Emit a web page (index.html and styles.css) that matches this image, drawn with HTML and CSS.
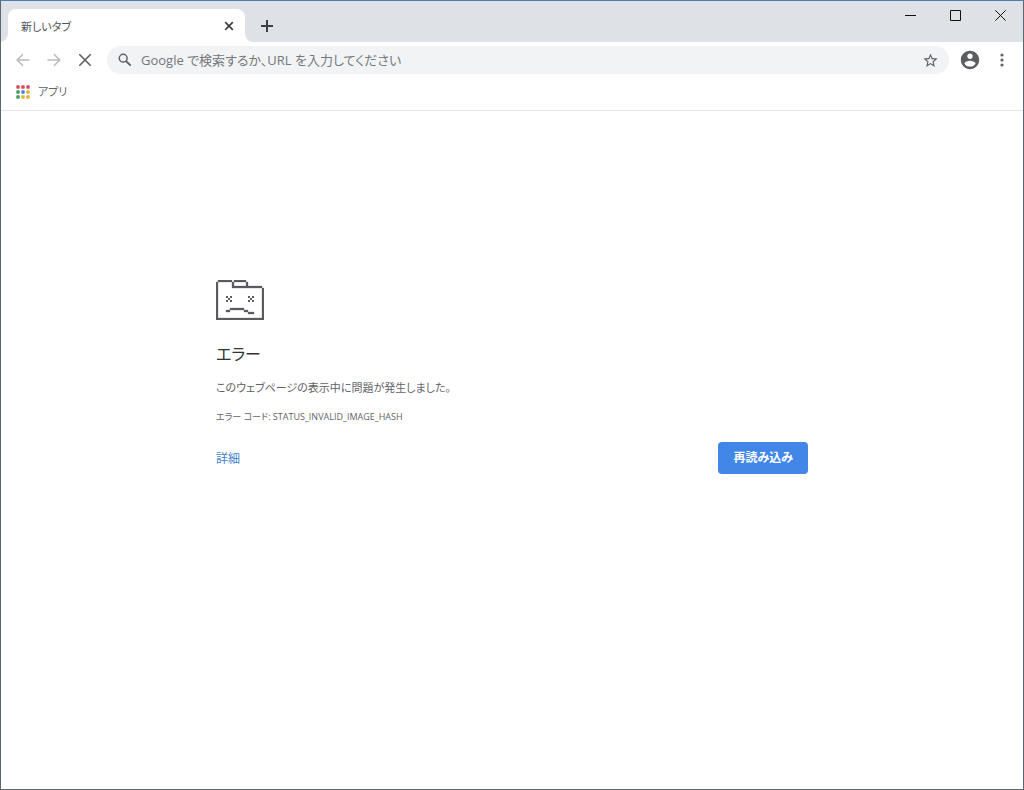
FILE: index.html
```html
<!DOCTYPE html>
<html lang="ja">
<head>
<meta charset="utf-8">
<meta name="viewport" content="width=device-width, initial-scale=1">
<title>新しいタブ</title>
<link rel="stylesheet" href="styles.css">
</head>
<body>
<div class="window">
  <header class="titlebar">
    <div class="tab">
      <span class="tab-title">新しいタブ</span>
      <button class="icon-button tab-close" aria-label="タブを閉じる">
        <svg width="10" height="10" viewBox="0 0 10 10"><path d="M1.2 1.2 8.8 8.8M8.8 1.2 1.2 8.8" fill="none" stroke="#3c4043" stroke-width="1.7"/></svg>
      </button>
    </div>
    <button class="icon-button new-tab" aria-label="新しいタブを開く">
      <svg width="12" height="12" viewBox="0 0 12 12"><path d="M6 0v12M0 6h12" fill="none" stroke="#3c4043" stroke-width="2"/></svg>
    </button>
    <div class="window-controls">
      <button class="icon-button window-button" aria-label="最小化"><svg width="11" height="11" viewBox="0 0 11 11"><path d="M0 5.5h11" stroke="#111" fill="none"/></svg></button>
      <button class="icon-button window-button" aria-label="最大化"><svg width="11" height="11" viewBox="0 0 11 11"><path d="M.5.5h10v10H.5z" stroke="#111" fill="none"/></svg></button>
      <button class="icon-button window-button" aria-label="閉じる"><svg width="11" height="11" viewBox="0 0 11 11"><path d="M.3.3l10.4 10.4M10.7.3.3 10.7" stroke="#111" fill="none"/></svg></button>
    </div>
  </header>

  <nav class="toolbar" aria-label="ツールバー">
    <button class="icon-button nav-button" aria-label="戻る"><svg width="14" height="14" viewBox="0 0 14 14"><path d="M13.5 7H1.5M7 1.2 1.2 7 7 12.8" fill="none" stroke="#babcbe" stroke-width="1.6"/></svg></button>
    <button class="icon-button nav-button" aria-label="進む"><svg width="14" height="14" viewBox="0 0 14 14"><path d="M.5 7h12M7 1.2 12.8 7 7 12.8" fill="none" stroke="#babcbe" stroke-width="1.6"/></svg></button>
    <button class="icon-button nav-button" aria-label="読み込みを中止"><svg width="14" height="14" viewBox="0 0 14 14"><path d="M1.3 1.3l11.4 11.4M12.7 1.3 1.3 12.7" fill="none" stroke="#5a5d61" stroke-width="1.6"/></svg></button>
    <div class="omnibox">
      <svg width="14" height="14" viewBox="0 0 14 14" aria-hidden="true"><circle cx="5.2" cy="5.2" r="3.9" fill="none" stroke="#5f6368" stroke-width="1.5"/><path d="M8 8l4.7 4.7" stroke="#5f6368" stroke-width="1.8"/></svg>
      <input class="address" type="text" aria-label="アドレスと検索バー" placeholder="Google で検索するか、URL を入力してください">
      <button class="icon-button" aria-label="ブックマークに追加"><svg width="17" height="17" viewBox="0 0 24 24"><path fill="#5f6368" d="M22 9.24l-7.19-.62L12 2 9.19 8.63 2 9.24l5.46 4.73L5.82 21 12 17.27 18.18 21l-1.63-7.03L22 9.24zM12 15.4l-3.76 2.27 1-4.28-3.32-2.88 4.38-.38L12 6.1l1.71 4.04 4.38.38-3.32 2.88 1 4.28L12 15.4z"/></svg></button>
    </div>
    <button class="icon-button profile" aria-label="プロフィール"><svg width="22" height="22" viewBox="0 0 24 24"><path fill="#5a5d61" d="M12 2C6.48 2 2 6.48 2 12s4.48 10 10 10 10-4.48 10-10S17.52 2 12 2zm0 3c1.66 0 3 1.34 3 3s-1.34 3-3 3-3-1.34-3-3 1.34-3 3-3zm0 14.2c-2.5 0-4.71-1.28-6-3.22.03-1.99 4-3.08 6-3.08 1.99 0 5.97 1.09 6 3.08-1.29 1.94-3.5 3.22-6 3.22z"/></svg></button>
    <button class="icon-button menu" aria-label="メニュー"><svg width="4" height="14" viewBox="0 0 4 14"><g fill="#5f6368"><circle cx="2" cy="2" r="1.6"/><circle cx="2" cy="7" r="1.6"/><circle cx="2" cy="12" r="1.6"/></g></svg></button>
  </nav>

  <nav class="bookmarks" aria-label="ブックマーク バー">
    <button class="apps">
      <svg width="14" height="14" viewBox="0 0 14 14" aria-hidden="true"><g fill="#d9485a"><rect x=".3" y=".3" width="3.4" height="3.4" rx=".8"/><rect x="5.3" y=".3" width="3.4" height="3.4" rx=".8"/><rect x="10.3" y=".3" width="3.4" height="3.4" rx=".8"/></g><g fill="#3d9e5c"><rect x=".3" y="5.3" width="3.4" height="3.4" rx=".8"/><rect x=".3" y="10.3" width="3.4" height="3.4" rx=".8"/></g><rect fill="#4380df" x="5.3" y="5.3" width="3.4" height="3.4" rx=".8"/><g fill="#dfb23a"><rect x="10.3" y="5.3" width="3.4" height="3.4" rx=".8"/><rect x="5.3" y="10.3" width="3.4" height="3.4" rx=".8"/><rect x="10.3" y="10.3" width="3.4" height="3.4" rx=".8"/></g></svg>
      <span>アプリ</span>
    </button>
  </nav>

  <main class="page">
    <section class="error">
      <svg class="sad-icon" width="48" height="40" viewBox="0 0 24 20" aria-hidden="true">
        <path fill="#5a5c60" stroke="#5a5c60" stroke-width=".15" d="M1 0h7v1H1zM9 0h6v1H9zM0 1h1v19H0zM8 1h1v2H8zM15 1h1v2h-1zM8 3h14v1H8zM22 3h1v1h-1zM23 4h1v16h-1zM0 19h24v1H0zM7 14h7v1H7zM5 15h2v1H5zM14 15h2v1h-2zM16 16h3v1h-3z"/>
        <path fill="#5a5c60" d="M5 8h1v1H5zM7 8h1v1H7zM6 9h1v1H6zM5 10h1v1H5zM7 10h1v1H7zM16 8h1v1h-1zM18 8h1v1h-1zM17 9h1v1h-1zM16 10h1v1h-1zM18 10h1v1h-1z"/>
      </svg>
      <h1 class="heading">エラー</h1>
      <p class="message">このウェブページの表示中に問題が発生しました。</p>
      <p class="code">エラー コード: STATUS_INVALID_IMAGE_HASH</p>
      <div class="actions">
        <a class="details" href="#details">詳細</a>
        <button class="reload">再読み込み</button>
      </div>
    </section>
  </main>
</div>
</body>
</html>
```

FILE: styles.css
```css
* {
  box-sizing: border-box;
}

body {
  margin: 0;
  font-family: "Open Sans", "Noto Sans CJK JP", sans-serif;
  font-feature-settings: "palt";
  color: #5f6368;
  background: #fff;
}

button,
input {
  font: inherit;
  font-feature-settings: inherit;
  color: inherit;
}

svg {
  display: block;
  flex: none;
}

.window {
  display: flex;
  flex-direction: column;
  min-height: 100vh;
  border: 1px solid #5b6673;
  border-top-color: #4f7fae;
}

.icon-button {
  display: flex;
  flex: none;
  align-items: center;
  justify-content: center;
  padding: 0;
  border: 0;
  background: none;
}

.titlebar {
  display: flex;
  align-items: flex-end;
  height: 41px;
  padding-left: 7px;
  background: #dee1e6;
}

.tab {
  position: relative;
  display: flex;
  flex: 0 1 237px;
  align-items: center;
  justify-content: space-between;
  height: 33px;
  padding: 0 8px 0 13px;
  border-radius: 8px 8px 0 0;
  background: #fff;
}

.tab::before,
.tab::after {
  content: "";
  position: absolute;
  bottom: 0;
  width: 7px;
  height: 7px;
}

.tab::before {
  right: 100%;
  background: radial-gradient(circle at 0 0, #dee1e6 6px, #fff 7px);
}

.tab::after {
  left: 100%;
  background: radial-gradient(circle at 100% 0, #dee1e6 6px, #fff 7px);
}

.tab-title {
  padding-top: 2px;
  font-size: 11px;
  line-height: 16px;
  color: #505357;
}

.tab-close {
  width: 16px;
  height: 16px;
}

.new-tab {
  width: 28px;
  height: 33px;
  margin-left: 8px;
}

.window-controls {
  display: flex;
  align-self: flex-start;
  margin-left: auto;
}

.window-button {
  width: 45px;
  height: 29px;
}

.toolbar {
  display: flex;
  align-items: center;
  height: 36px;
  padding: 0 5px 0 6px;
}

.nav-button {
  width: 31px;
  height: 28px;
}

.omnibox {
  display: flex;
  flex: 1;
  align-items: center;
  gap: 9px;
  height: 28px;
  min-width: 0;
  margin-left: 7px;
  padding: 0 10px 0 11px;
  border-radius: 14px;
  background: #f1f3f4;
}

.address {
  flex: 1;
  min-width: 0;
  padding: 0;
  border: 0;
  outline: 0;
  background: none;
  font-size: 13px;
  line-height: 20px;
}

.address::placeholder {
  color: #75787c;
  opacity: 1;
}

.profile {
  width: 32px;
  margin-left: 5px;
}

.menu {
  width: 32px;
}

.bookmarks {
  display: flex;
  align-items: center;
  height: 33px;
  padding: 0 15px 4px;
  border-bottom: 1px solid #e3e5e8;
}

.apps {
  display: flex;
  align-items: center;
  gap: 8px;
  padding: 0;
  border: 0;
  background: none;
  font-size: 11px;
  line-height: 16px;
}

.page {
  flex: 1;
  padding: 169px 24px 40px;
}

.error {
  max-width: 592px;
  margin: 0 auto;
}

.heading {
  margin: 20px 0 0;
  font-size: 16px;
  font-weight: 400;
  line-height: 28px;
  color: #303236;
}

.message {
  margin: 10px 0 0;
  font-size: 11px;
  line-height: 20px;
}

.code {
  margin: 11px 0 0;
  font-size: 9px;
  line-height: 16px;
}

.actions {
  display: flex;
  align-items: center;
  justify-content: space-between;
  margin-top: 17px;
}

.details {
  padding-top: 2px;
  font-size: 12px;
  line-height: 20px;
  color: #4381cd;
  text-decoration: none;
}

.reload {
  height: 32px;
  padding: 0 15px;
  border: 0;
  border-radius: 4px;
  background: #4287e8;
  font-size: 12px;
  font-weight: 700;
  line-height: 16px;
  color: #fff;
}
```
